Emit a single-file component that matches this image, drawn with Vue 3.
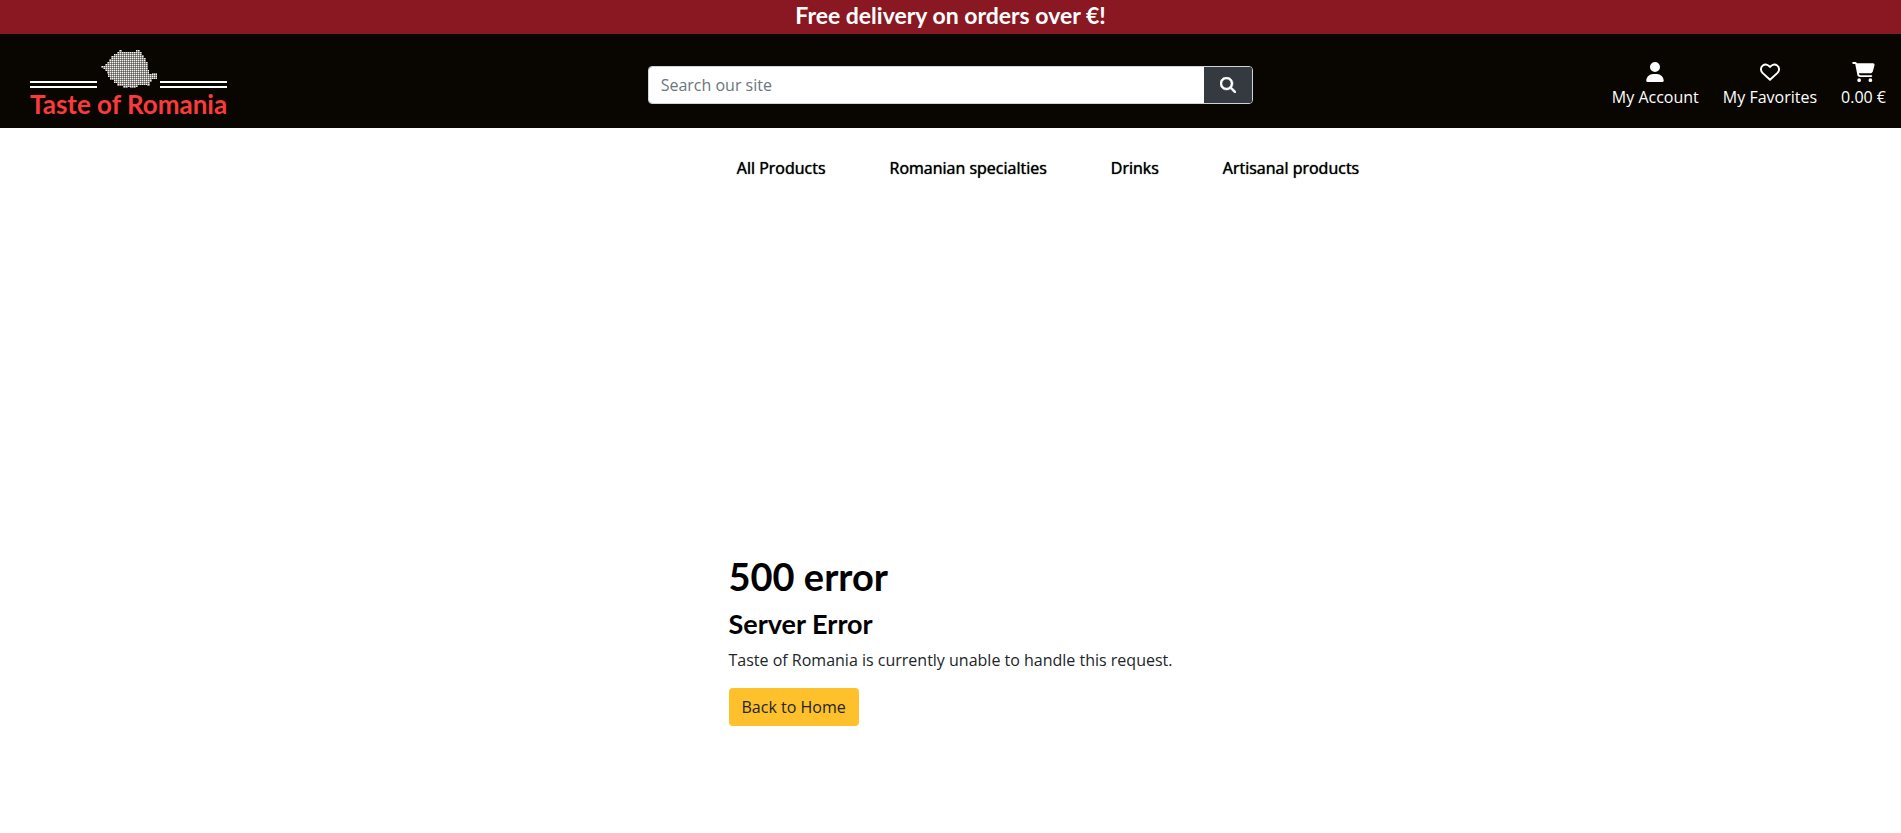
<script setup>
const categories = ['All Products', 'Romanian specialties', 'Drinks', 'Artisanal products']
</script>

<template>
  <div class="page">
    <p class="promo">Free delivery on orders over €!</p>

    <header class="header">
      <a class="logo" href="#" aria-label="Taste of Romania">
        <svg width="198" height="78" viewBox="0 0 198 78" aria-hidden="true">
          <defs>
            <pattern id="dots" width="2" height="2" patternUnits="userSpaceOnUse">
              <rect width="2" height="2" fill="#5f5e5b" />
              <rect width="1" height="1" fill="#f4f4f3" />
              <rect x="1" width="1" height="1" fill="#92918e" />
              <rect y="1" width="1" height="1" fill="#92918e" />
            </pattern>
          </defs>
          <path
            fill="url(#dots)"
            d="M71 24h4v-2h2v-2h2v-3h2v-3h3v-2h3v-2h2v-2h3v2h14v-2h4v2h2v3h2v3h2v4h2v8h1v4h3v-1h5v6h-5v3h-2v4h-3v-1h-9v2h-2v1h-6v-1h-2v1h-5v-2h-6v-3h-3v-3h-4v-3h-2v-3h-1v-3h-2v-2h-2v-1h-2z"
          />
          <g fill="#fff">
            <rect y="39" width="67" height="2" />
            <rect y="44" width="67" height="2" />
            <rect x="130" y="39" width="67" height="2" />
            <rect x="130" y="44" width="67" height="2" />
          </g>
          <text x="0" y="72" class="logo-text">Taste of Romania</text>
        </svg>
      </a>

      <form class="search" role="search" @submit.prevent>
        <input type="search" placeholder="Search our site" aria-label="Search our site" />
        <button type="submit" aria-label="Search">
          <svg width="16" height="16" viewBox="0 0 512 512" aria-hidden="true">
            <path fill="currentColor" stroke="currentColor" stroke-width="16" d="M416 208c0 45.900-14.900 88.300-40 122.700L502.600 457.400c12.500 12.500 12.500 32.800 0 45.300s-32.800 12.500-45.300 0L330.700 376c-34.400 25.200-76.800 40-122.700 40C93.100 416 0 322.900 0 208S93.100 0 208 0S416 93.100 416 208zM208 352a144 144 0 1 0 0-288 144 144 0 1 0 0 288z" />
          </svg>
        </button>
      </form>

      <nav class="actions" aria-label="Account">
        <a href="#">
          <svg width="18" height="20" viewBox="0 0 448 512" aria-hidden="true">
            <path fill="currentColor" d="M224 256A128 128 0 1 0 224 0a128 128 0 1 0 0 256zm-45.700 48C79.800 304 0 383.800 0 482.300C0 498.700 13.300 512 29.700 512H418.300c16.400 0 29.700-13.300 29.700-29.700C448 383.800 368.200 304 269.700 304H178.300z" />
          </svg>
          <span>My Account</span>
        </a>
        <a href="#">
          <svg width="20" height="20" viewBox="0 0 512 512" aria-hidden="true">
            <path
              fill="none"
              stroke="currentColor"
              stroke-width="50"
              stroke-linejoin="round"
              d="M256 456L64 278C8 224 12 130 72 88C130 48 206 62 256 126C306 62 382 48 440 88C500 130 504 224 448 278Z"
            />
          </svg>
          <span>My Favorites</span>
        </a>
        <a href="#">
          <svg width="23" height="20" viewBox="0 0 576 512" aria-hidden="true">
            <path fill="currentColor" d="M0 24C0 10.700 10.700 0 24 0H69.500c22 0 41.500 12.800 50.600 32h411c26.300 0 45.500 25 38.600 50.400l-41 152.300c-8.500 31.400-37 53.300-69.500 53.300H170.700l5.400 28.500c2.200 11.300 12.100 19.500 23.600 19.500H488c13.300 0 24 10.700 24 24s-10.700 24-24 24H199.700c-34.600 0-64.300-24.600-70.700-58.500L77.400 54.500c-.7-3.800-4-6.500-7.900-6.500H24C10.700 48 0 37.300 0 24zM128 464a48 48 0 1 1 96 0 48 48 0 1 1-96 0zm336-48a48 48 0 1 1 0 96 48 48 0 1 1 0-96z" />
          </svg>
          <span>0.00 €</span>
        </a>
      </nav>
    </header>

    <nav class="categories" aria-label="Categories">
      <a v-for="name in categories" :key="name" href="#">{{ name }}</a>
    </nav>

    <main class="error">
      <div>
        <h1>500 error</h1>
        <h2>Server Error</h2>
        <p>Taste of Romania is currently unable to handle this request.</p>
        <a class="home" href="#">Back to Home</a>
      </div>
    </main>
  </div>
</template>

<style>
body {
  background: #fff;
}
</style>

<style scoped>
.page {
  font: 400 16px/24px "Open Sans", sans-serif;
  color: #000;
}
a {
  color: inherit;
  text-decoration: none;
}
.promo {
  margin: 0;
  padding: 1px 0 5px;
  background: #8a1822;
  color: #fff;
  font: 700 23px/28px Lato, sans-serif;
  text-align: center;
}
.header {
  display: grid;
  grid-template-columns: repeat(3, 1fr);
  align-items: center;
  background: #090601;
  color: #fff;
}
.logo {
  padding: 8px 30px;
}
.logo svg {
  display: block;
}
.logo-text {
  fill: #fb3b3b;
  font: 700 26px Lato, sans-serif;
}
.search {
  display: flex;
  margin: 8px 14px 0;
  border: 1px solid #ced4da;
  border-radius: 4px;
  overflow: hidden;
}
.search input {
  flex: 1;
  min-width: 0;
  height: 36px;
  box-sizing: border-box;
  padding: 0 12px;
  border: 0;
  background: #fff;
  color: #495057;
  font: inherit;
  appearance: none;
}
.search input::placeholder {
  color: #6c757d;
  opacity: 1;
}
.search button {
  display: grid;
  place-items: center;
  width: 48px;
  padding: 0;
  border: 0;
  background: #343a40;
  color: #fff;
}
.actions {
  display: flex;
  justify-content: flex-end;
  gap: 24px;
  padding: 8px 15px 0;
}
.actions a {
  display: flex;
  flex-direction: column;
  align-items: center;
  gap: 3px;
}
.categories {
  display: flex;
  justify-content: center;
  gap: 64px;
  padding: 28px 0 0 195px;
  text-shadow: 0 0 1px #000;
}
.error {
  display: flex;
  justify-content: center;
  padding: 373px 15px 0;
}
h1,
h2,
.error p {
  margin: 0 0 8px;
}
h1 {
  font: 700 38px/46px Lato, sans-serif;
}
h2 {
  font: 700 27px/33px Lato, sans-serif;
}
.error p {
  margin-bottom: 16px;
  color: #212529;
}
.home {
  display: inline-block;
  padding: 7px 13px;
  border-radius: 4px;
  background: #fec02b;
  color: #212529;
}
</style>
